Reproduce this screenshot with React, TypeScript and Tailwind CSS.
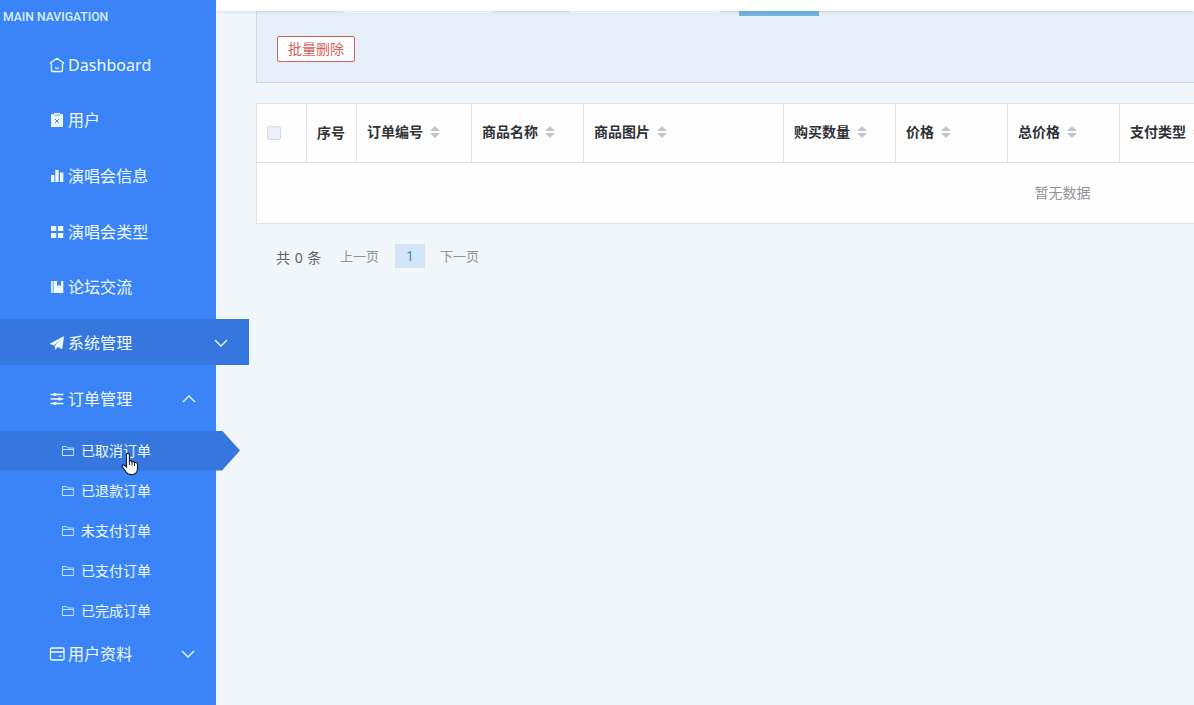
import type { ReactNode } from "react";

interface MenuItem {
  label: string;
  icon: ReactNode;
  active?: boolean;
  arrow?: "up" | "down";
  children?: string[];
}

interface Column {
  label: string;
  width: string;
  sortable?: boolean;
}

function Icon({ children }: { children: ReactNode }) {
  return (
    <svg viewBox="0 0 16 16" className="w-4 h-4 shrink-0" fill="none" stroke="currentColor">
      {children}
    </svg>
  );
}

const menu: MenuItem[] = [
  {
    label: "Dashboard",
    icon: (
      <Icon>
        <path d="M8 1.300 1.300 6l1.200 1.200v6.300q0 1 1 1h9q1 0 1-1V7.200L14.700 6Z" strokeWidth="1.300" strokeLinejoin="round" />
        <path d="M6 10.700q2 1.200 4 0" strokeWidth="1.200" />
      </Icon>
    )
  },
  {
    label: "用户",
    icon: (
      <Icon>
        <path d="M2 2.300h3V1h6v1.300h3v12.700H2Z" fill="currentColor" stroke="none" />
        <path d="M5.200 3.200h5.600" stroke="#3b84f8" strokeWidth=".8" />
        <path d="m5.800 6.800 4.400 4.400m0-4.400-4.400 4.400" stroke="#3b84f8" />
      </Icon>
    )
  },
  {
    label: "演唱会信息",
    icon: (
      <Icon>
        <path d="M2 7h3.300v7H2ZM6.300 2h3.400v12H6.300ZM11 4.500h3.300V14H11Z" fill="currentColor" stroke="none" />
      </Icon>
    )
  },
  {
    label: "演唱会类型",
    icon: (
      <Icon>
        <path d="M2 2h5.300v5H2Zm7 0h5.300v5H9ZM2 9h5.300v5H2Zm7 0h5.300v5H9Z" fill="currentColor" stroke="none" />
      </Icon>
    )
  },
  {
    label: "论坛交流",
    icon: (
      <Icon>
        <path d="M2 2h1.700v12H2ZM4.500 2H8v5.500l2-1.800 2 1.800V2h2.300v12H4.500Z" fill="currentColor" stroke="none" />
      </Icon>
    )
  },
  {
    label: "系统管理",
    active: true,
    arrow: "down",
    icon: (
      <Icon>
        <path d="M1 8.800 14.800 1.500 13 14 8.900 11.800 6.400 14.600 6 10.800 12 4.800 4.800 10.300Z" fill="currentColor" stroke="currentColor" strokeWidth=".4" />
      </Icon>
    )
  },
  {
    label: "订单管理",
    arrow: "up",
    icon: (
      <Icon>
        <path d="M1.700 3.500h12.600M1.700 8h12.600M1.700 12.500h12.600" strokeWidth="1.400" />
        <path d="M6 1.900v3.200M10.500 6.400v3.200M6 10.900v3.200" strokeWidth="2.600" />
      </Icon>
    ),
    children: ["已取消订单", "已退款订单", "未支付订单", "已支付订单", "已完成订单"]
  },
  {
    label: "用户资料",
    arrow: "down",
    icon: (
      <Icon>
        <rect x="1.500" y="2" width="13.500" height="12" rx="1.200" strokeWidth="1.300" />
        <path d="M1.500 6h13.500M9.800 10.200h2.700" strokeWidth="1.300" />
      </Icon>
    )
  }
];

const columns: Column[] = [
  { label: "订单编号", width: "w-[115px]", sortable: true },
  { label: "商品名称", width: "w-[112px]", sortable: true },
  { label: "商品图片", width: "w-[200px]", sortable: true },
  { label: "购买数量", width: "w-[112px]", sortable: true },
  { label: "价格", width: "w-[112px]", sortable: true },
  { label: "总价格", width: "w-[112px]", sortable: true },
  { label: "支付类型", width: "w-[112px]", sortable: true }
];

function Chevron({ dir }: { dir: "up" | "down" }) {
  return (
    <svg viewBox="0 0 14 8" className="w-3.5 h-2" fill="none" stroke="currentColor" strokeWidth="1.300">
      <path d={dir === "down" ? "m1 1 6 6 6-6" : "m1 7 6-6 6 6"} />
    </svg>
  );
}

function FolderIcon() {
  return (
    <svg viewBox="0 0 14 12" className="w-3.5 h-3 shrink-0 text-[#b9e2fd]" fill="none" stroke="currentColor">
      <path d="M1.500 10.500v-9h4l1.500 1.500h5.500v7.500ZM1.500 4.500h11" />
    </svg>
  );
}

function SortIcon() {
  return (
    <svg viewBox="0 0 10 12" className="w-2.5 h-3 ml-[7px]" fill="#c0c4cc">
      <path d="M0 5 5 0l5 5ZM0 7l5 5 5-5Z" />
    </svg>
  );
}

function Cursor() {
  return (
    <svg viewBox="0 0 18 24" className="absolute left-[121px] top-[21px] w-[18px] h-6 z-20">
      <path
        d="M5.500 14V3q0-1.700 1.400-1.700T8.400 3v6q1.600-.8 2.600.8 1.700-.6 2.500.8 2.800-.6 3 1.800v4q0 3-1.600 4.600-.8 1.600-4.300 1.600-4 0-5.600-2.600L1.200 14.500q-.4-1.400.8-1.700 1.300-.2 3.500 2.200Z"
        fill="#fff"
        stroke="#17233c"
        strokeWidth="1.200"
      />
      <path d="M8.400 9v4M11 10v3.500M13.500 11v3" stroke="#17233c" strokeWidth="1" />
    </svg>
  );
}

function Sidebar() {
  return (
    <aside className="relative z-10 w-[216px] shrink-0 bg-[#3b84f8] text-[#effaff]">
      <div className="h-[41.400px] pl-[3px] pt-[9px] text-[12.200px] leading-4 font-medium font-[Roboto] text-[#d8efff]">
        MAIN NAVIGATION
      </div>
      <ul className="flex flex-col gap-[9.600px]">
        {menu.map((item) => (
          <li key={item.label}>
            <div
              className={`flex h-[46px] items-center pl-[49px] text-base ${
                item.active ? "w-[249px] bg-[#3577de] pr-5" : "w-[216px]"
              } ${item.children ? "pt-0.5 pr-5" : "pt-[0.800px] pr-[21px]"}`}
            >
              {item.icon}
              <span className="ml-[3px] flex-1 whitespace-nowrap tracking-[0.050px]">{item.label}</span>
              {item.arrow && <Chevron dir={item.arrow} />}
            </div>
            {item.children && (
              <ul className="mt-[9.600px] -mb-[9.600px]">
                {item.children.map((child, i) => (
                  <li key={child} className={`relative text-sm ${i === 0 ? "z-10" : ""}`}>
                    <div
                      className={`flex h-10 items-center pl-[61px] ${
                        i === 0
                          ? "w-[240px] bg-[#3577de] [clip-path:polygon(0_0,222px_0,100%_50%,222px_100%,0_100%)]"
                          : ""
                      }`}
                    >
                      <FolderIcon />
                      <span className="ml-1.5">{child}</span>
                    </div>
                    {i === 0 && <Cursor />}
                  </li>
                ))}
              </ul>
            )}
          </li>
        ))}
      </ul>
    </aside>
  );
}

function OrderTable() {
  return (
    <div className="mt-5 w-[1613px] border border-[#dfe3e9] bg-[#fefefe]">
      <div className="flex h-[59px] border-b border-[#dfe3e9] text-sm font-bold text-[#303237]">
        <div className="flex w-[50px] shrink-0 items-center border-r border-[#dfe3e9] pl-2.5">
          <span className="h-3.5 w-3.5 rounded-xs border border-[#d5dae4] bg-[#edf0fa]" />
        </div>
        <div className="flex w-[50px] shrink-0 items-center border-r border-[#dfe3e9] pl-2.5">序号</div>
        {columns.map((col) => (
          <div
            key={col.label}
            className={`flex shrink-0 items-center border-r border-[#dfe3e9] pb-0.5 pl-2.5 ${col.width}`}
          >
            {col.label}
            {col.sortable && <SortIcon />}
          </div>
        ))}
      </div>
      <div className="flex h-[60px] items-center justify-center text-sm text-[#909399]">暂无数据</div>
    </div>
  );
}

export default function App() {
  return (
    <div className="flex h-[705px] w-[1194px] overflow-hidden bg-[#f1f6fa] font-['Noto_Sans','Noto_Sans_CJK_SC',sans-serif]">
      <Sidebar />
      <main className="min-w-0 flex-1 overflow-hidden">
        <header className="relative h-[11px] bg-white shadow-[0_1px_3px_rgba(0,21,41,0.12)]" />
        <div className="pl-10">
          <section className="h-[72px] w-[1613px] border-x border-b border-[#c9daf0] bg-[#e6eef7] pl-5">
            <div className="flex h-[5px] items-start">
              <div className="ml-[66px] h-0.5 w-[150px] rounded-b-xs bg-[#fbfcfd]" />
              <div className="ml-[77px] h-0.5 w-[150px] rounded-b-xs bg-[#fbfcfd]" />
              <div className="ml-[19px] h-[5px] w-20 bg-[#73b2de]" />
            </div>
            <button className="mt-5 flex h-[26px] w-[78px] items-center justify-center rounded-xs border border-[#d1625f] bg-white pb-px text-sm text-[#d3625b]">
              批量删除
            </button>
          </section>
          <OrderTable />
          <div className="mt-5 flex h-6 items-center pl-5 text-[13px] text-[#606266]">
            <span className="w-[64px] pt-1 text-sm whitespace-pre [word-spacing:1px]">共 0 条</span>
            <span className="w-[55px] pt-px text-[#8f949c]">上一页</span>
            <span className="flex h-6 w-[30px] items-center justify-center bg-[#d2e6f8] text-sm text-[#3f91c9]">1</span>
            <span className="ml-[15px] pt-px text-[#8f949c]">下一页</span>
          </div>
        </div>
      </main>
    </div>
  );
}
